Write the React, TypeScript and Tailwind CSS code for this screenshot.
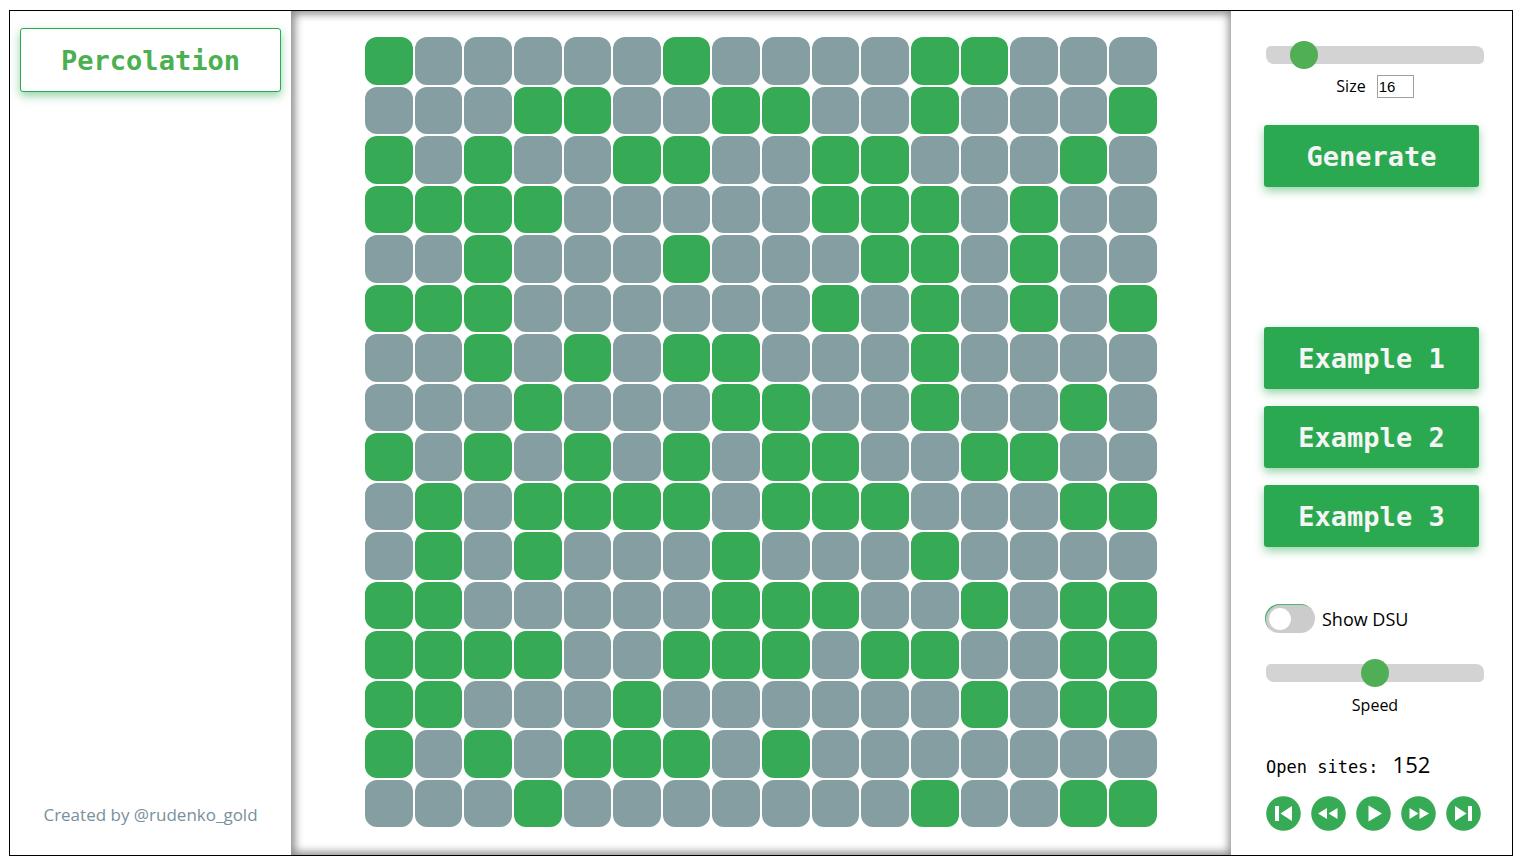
import React, { useState } from "react";

const ROWS = [
  "#.....#....##...",
  "...##..##..#...#",
  "#.#..##..##...#.",
  "####.....###.#..",
  "..#...#...##.#..",
  "###......#.#.#.#",
  "..#.#.##...#....",
  "...#...##..#..#.",
  "#.#.#.#.##..##..",
  ".#.####.###...##",
  ".#.#...#...#....",
  "##.....###..#.##",
  "####..###.##..##",
  "##...#......#.##",
  "#.#.###.#.......",
  "...#.......#..##",
];

const slider =
  "block h-[18px] w-full cursor-pointer appearance-none rounded-tl-[5px] rounded-tr-[8px] rounded-br-[5px] rounded-bl-[8px] bg-[#d3d3d3] outline-none [&::-webkit-slider-thumb]:size-7 [&::-webkit-slider-thumb]:appearance-none [&::-webkit-slider-thumb]:rounded-full [&::-webkit-slider-thumb]:bg-[#50af55]";

function ActionButton({ children }: { children: React.ReactNode }) {
  return (
    <button
      type="button"
      className="h-[62px] w-[215px] cursor-pointer rounded-[3px] bg-[#2ba951] pt-[2px] font-['DejaVu_Sans_Mono',monospace] text-[27px] leading-8 font-bold whitespace-pre text-[#f5f5f5] shadow-[0_4px_10px_rgba(43,169,81,0.5)]"
    >
      {children}
    </button>
  );
}

function RoundButton({ label, children }: { label: string; children: React.ReactNode }) {
  return (
    <button type="button" aria-label={label} className="cursor-pointer">
      <svg viewBox="0 0 35 35" className="block size-[35px]">
        <circle cx="17.5" cy="17.5" r="17.3" fill="#37aa55" />
        <g fill="#fff">{children}</g>
      </svg>
    </button>
  );
}

export default function App() {
  const [size, setSize] = useState(16);
  const [speed, setSpeed] = useState(50);
  const [dsu, setDsu] = useState(false);

  return (
    <div className="h-screen bg-white py-[10px] pr-[10px] pl-[9px] font-['Open_Sans',sans-serif] text-base text-black">
      <div className="flex h-full border border-black">
        <aside className="flex w-[281px] shrink-0 flex-col justify-between px-[10px] pt-[17px] pb-7">
          <button
            type="button"
            className="h-16 w-full cursor-pointer rounded-[3px] border border-[#2ba951] bg-white pt-[2px] font-['DejaVu_Sans_Mono',monospace] text-[27px] leading-8 font-bold text-[#4caf50] shadow-[0_4px_10px_rgba(43,169,81,0.5)]"
          >
            Percolation
          </button>
          <p className="text-center text-[17px] leading-6 text-[#78909c]">Created by @rudenko_gold</p>
        </aside>

        <main className="flex min-w-0 flex-1 justify-center pt-[26px] pb-7 shadow-[inset_1px_0_8px_3px_#8c8c8c]">
          <div className="grid aspect-[792/790] h-full grid-cols-16 grid-rows-16 gap-[2px]">
            {ROWS.join("")
              .split("")
              .map((site, i) => (
                <div
                  key={i}
                  className={site === "#" ? "rounded-[12px] bg-[#37aa55]" : "rounded-[12px] bg-[#859ea2]"}
                />
              ))}
          </div>
        </main>

        <aside className="flex w-[281px] shrink-0 flex-col pt-[35px] pr-[26px] pb-6 pl-[33px]">
          <div className="px-[2px]">
            <input
              type="range"
              aria-label="Grid size"
              min={4}
              max={100}
              value={size}
              onChange={(e) => setSize(Number(e.target.value))}
              className={slider}
            />
            <div className="mt-[10px] flex items-center justify-center gap-[11px]">
              <label htmlFor="size">Size</label>
              <input
                id="size"
                type="text"
                value={size}
                onChange={(e) => setSize(Number(e.target.value) || 4)}
                className="h-[23px] w-[37px] border border-[#a0a0a0] px-px font-['Liberation_Sans',sans-serif] text-[15px] leading-5"
              />
            </div>
          </div>

          <div className="mt-[27px]">
            <ActionButton>Generate</ActionButton>
          </div>

          <div className="mt-[140px] flex flex-col gap-[17px]">
            <ActionButton>Example 1</ActionButton>
            <ActionButton>Example 2</ActionButton>
            <ActionButton>Example 3</ActionButton>
          </div>

          <label className="mt-[57px] flex cursor-pointer items-center gap-[7px] pl-[1px] text-[18px] leading-6">
            <input
              type="checkbox"
              checked={dsu}
              onChange={(e) => setDsu(e.target.checked)}
              className="h-[29px] w-[50px] cursor-pointer appearance-none rounded-full bg-[#ccc] p-1 shadow-[inset_1px_1px_0_#4cb870] before:block before:size-[22px] before:rounded-full before:bg-white checked:bg-[#2ba951] checked:before:ml-5"
            />
            Show DSU
          </label>

          <div className="mt-[31px] px-[2px]">
            <input
              id="speed"
              type="range"
              min={0}
              max={100}
              value={speed}
              onChange={(e) => setSpeed(Number(e.target.value))}
              className={slider}
            />
            <label htmlFor="speed" className="mt-[11px] block text-center leading-6">
              Speed
            </label>
          </div>

          <p className="mt-[31px] flex items-baseline gap-[14px] pl-[2px] leading-8">
            <span className="font-['DejaVu_Sans_Mono',monospace] text-[17px]">Open sites:</span>
            <output className="text-[22px]">152</output>
          </p>

          <div className="mt-auto flex gap-[10px] pl-[2px]">
            <RoundButton label="First step">
              <path d="M9 10h4v15H9zM26 10v15L14.5 17.5z" />
            </RoundButton>
            <RoundButton label="Step back">
              <path d="M16 12v11L7 17.5zM26.5 12v11L17.5 17.5z" />
            </RoundButton>
            <RoundButton label="Play">
              <path d="M12.5 9.5v16L26 17.5z" />
            </RoundButton>
            <RoundButton label="Step forward">
              <path d="M8.5 12v11L17.5 17.5zM18.5 12v11L28 17.5z" />
            </RoundButton>
            <RoundButton label="Last step">
              <path d="M9 10v15L20.5 17.5zM22 10h4v15h-4z" />
            </RoundButton>
          </div>
        </aside>
      </div>
    </div>
  );
}
